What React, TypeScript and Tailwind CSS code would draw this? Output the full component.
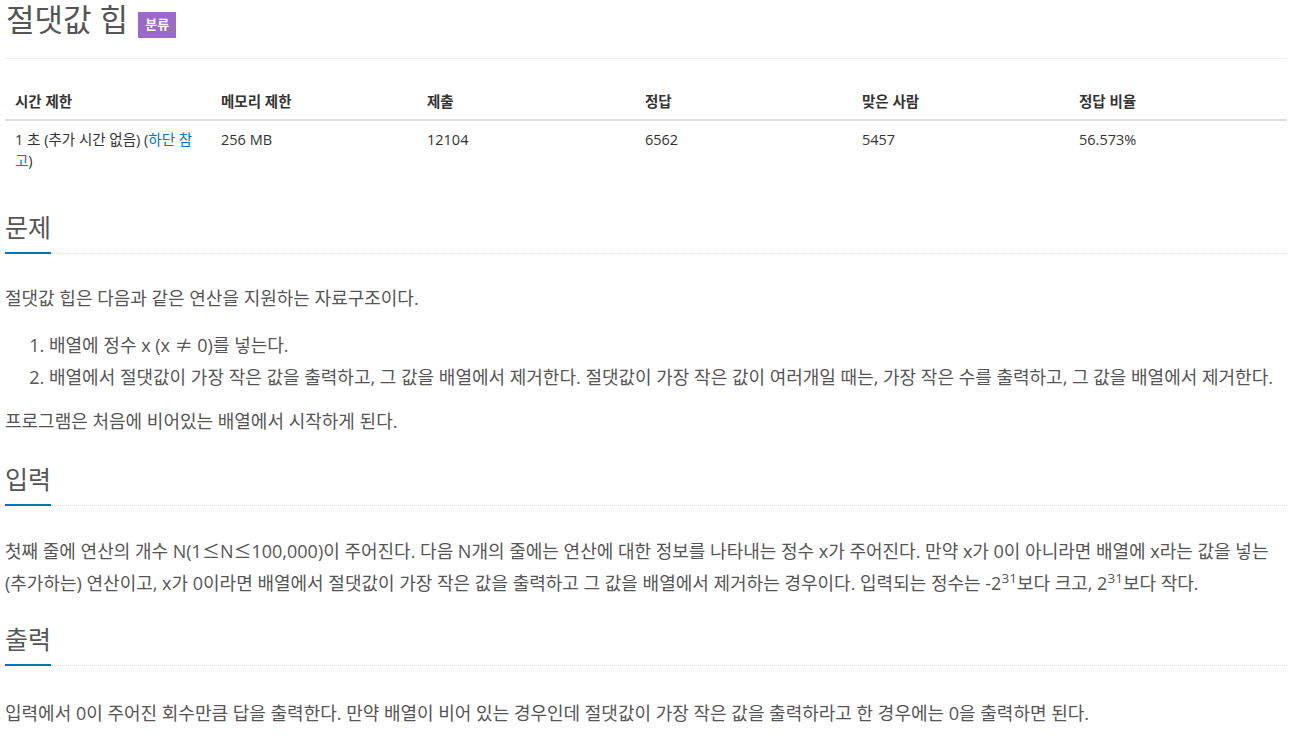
const stats = [
  { label: '시간 제한', value: null },
  { label: '메모리 제한', value: '256 MB' },
  { label: '제출', value: '12104' },
  { label: '정답', value: '6562' },
  { label: '맞은 사람', value: '5457' },
  { label: '정답 비율', value: '56.573%' },
];

function Headline({ title }: { title: string }) {
  return (
    <div className="flex border-b border-dotted border-[#ddd]">
      <h2 className="-mb-px border-b-2 border-[#0076c0] pb-[10px] text-[25px] leading-[30px] font-normal text-[#555]">
        {title}
      </h2>
    </div>
  );
}

// math symbols fall back to the CJK font in the original
function Sym({ c }: { c: string }) {
  return <span className="font-['Noto_Sans_CJK_KR',sans-serif]">{c}</span>;
}

export default function App() {
  return (
    <div className="min-h-screen bg-white pl-[5px] pr-[3px] font-['Open_Sans','Noto_Sans_CJK_KR',sans-serif] text-[#555]">
      {/* Title */}
      <div className="flex items-end gap-[10px] pl-px">
        <h1 className="text-[31px] leading-[38px] font-normal text-[#555]">절댓값 힙</h1>
        <span className="flex h-[26px] w-[38px] items-center justify-center bg-[#9b69c8] text-[13px] font-bold text-white">
          분류
        </span>
      </div>
      <div className="mt-[20px] h-px bg-[#eee]" />

      {/* Stats table */}
      <div className="mt-[25px] grid grid-cols-[206px_206px_218px_217px_217px_1fr] text-[14.5px] leading-[21px] text-[#333]">
        {stats.map(s => (
          <div key={s.label} className="border-b-2 border-[#ddd] px-[10px] py-[7px] font-bold">
            {s.label}
          </div>
        ))}
        {stats.map(s => (
          <div key={s.label} className="px-[10px] py-[8px]">
            {s.value ?? (
              <>
                1 초 (추가 시간 없음) (<a className="text-[#0076c0]">하단 참고</a>)
              </>
            )}
          </div>
        ))}
      </div>

      {/* 문제 */}
      <section className="mt-[33px]">
        <Headline title="문제" />
        <div className="mt-[28px] text-[18px] leading-[32px]">
          <p>절댓값 힙은 다음과 같은 연산을 지원하는 자료구조이다.</p>
          <ol className="mt-[14px] list-decimal pl-[44px]">
            <li>
              배열에 정수 x (x <Sym c="≠" /> 0)를 넣는다.
            </li>
            <li>
              배열에서 절댓값이 가장 작은 값을 출력하고, 그 값을 배열에서 제거한다. 절댓값이 가장 작은 값이 여러개일 때는,
              가장 작은 수를 출력하고, 그 값을 배열에서 제거한다.
            </li>
          </ol>
          <p className="mt-[12px]">프로그램은 처음에 비어있는 배열에서 시작하게 된다.</p>
        </div>
      </section>

      {/* 입력 */}
      <section className="mt-[27px]">
        <Headline title="입력" />
        <div className="mt-[28px] text-[18px] leading-[32px]">
          <p>
            첫째 줄에 연산의 개수 N(1<Sym c="≤" />N<Sym c="≤" />100,000)이 주어진다. 다음 N개의 줄에는 연산에 대한 정보를
            나타내는 정수 x가 주어진다. 만약 x가 0이 아니라면 배열에 x라는 값을 넣는
            <span className="whitespace-nowrap">(추가하는)</span> 연산이고, x가 0이라면 배열에서 절댓값이 가장 작은 값을
            출력하고 그 값을 배열에서 제거하는 경우이다. 입력되는 정수는 -2<sup>31</sup>보다 크고, 2<sup>31</sup>보다
            작다.
          </p>
        </div>
      </section>

      {/* 출력 */}
      <section className="mt-[25px]">
        <Headline title="출력" />
        <div className="mt-[31px] text-[18px] leading-[32px]">
          <p>
            입력에서 0이 주어진 회수만큼 답을 출력한다. 만약 배열이 비어 있는 경우인데 절댓값이 가장 작은 값을
            출력하라고 한 경우에는 0을 출력하면 된다.
          </p>
        </div>
      </section>
    </div>
  );
}
